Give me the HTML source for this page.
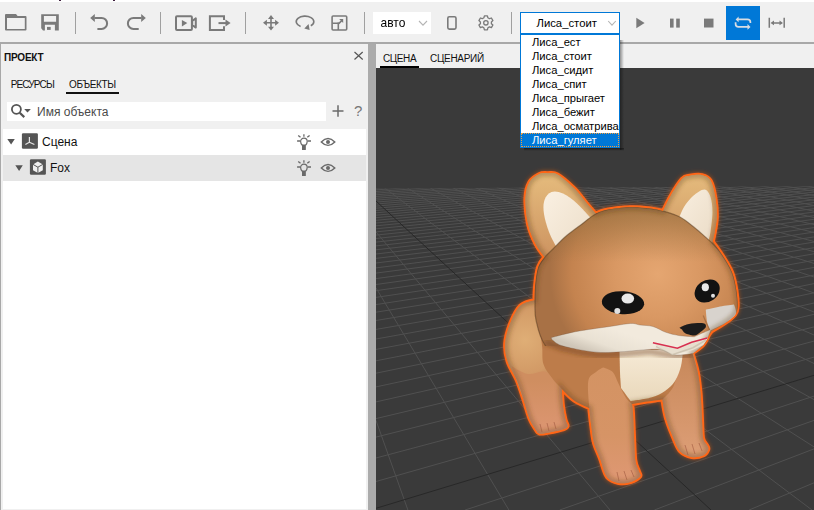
<!DOCTYPE html>
<html><head><meta charset="utf-8">
<style>
*{margin:0;padding:0;box-sizing:border-box}
html,body{width:814px;height:510px;overflow:hidden;background:#f0f0f0;font-family:"Liberation Sans",sans-serif;position:relative}
.a{position:absolute}
svg{position:absolute;overflow:visible}
.sep{position:absolute;top:12px;width:1px;height:22px;background:#a0a0a0}
</style></head><body>
<!-- top white strip -->
<div class="a" style="left:0;top:0;width:814px;height:2px;background:#fff"></div><div class="a" style="left:59px;top:0;width:2px;height:1px;background:#402040"></div><div class="a" style="left:113px;top:0;width:2px;height:1px;background:#402040"></div>
<!-- toolbar bottom border -->
<div class="a" style="left:0;top:42px;width:814px;height:2px;background:#a8a8a8"></div>

<!-- toolbar separators -->
<div class="sep" style="left:75px"></div>
<div class="sep" style="left:160px"></div>
<div class="sep" style="left:245px"></div>
<div class="sep" style="left:364px"></div>
<div class="sep" style="left:511px"></div>

<!-- left panel -->
<div class="a" style="left:0;top:44px;width:1px;height:466px;background:#a8a8a8"></div>
<div class="a" style="left:4px;top:52px;font-size:10px;font-weight:bold;color:#111;letter-spacing:-0.2px">ПРОЕКТ</div>
<div class="a" style="left:10.7px;top:79px;font-size:10px;color:#111;letter-spacing:-0.85px">РЕСУРСЫ</div>
<div class="a" style="left:69px;top:79px;font-size:10px;color:#111;letter-spacing:-0.4px">ОБЪЕКТЫ</div>
<div class="a" style="left:66px;top:92px;width:53px;height:2px;background:#111"></div>
<!-- search box -->
<div class="a" style="left:7px;top:102px;width:319px;height:19px;background:#fff"></div>
<div class="a" style="left:37px;top:105px;font-size:12px;color:#4a4a4a">Имя объекта</div>
<!-- tree -->
<div class="a" style="left:3px;top:129px;width:363px;height:380px;background:#fff"></div>
<div class="a" style="left:3px;top:155px;width:363px;height:26px;background:#e5e5e5"></div>
<div class="a" style="left:42px;top:135px;font-size:12px;color:#111">Сцена</div>
<div class="a" style="left:50px;top:161px;font-size:12px;color:#111">Fox</div>

<!-- splitter -->
<div class="a" style="left:368px;top:44px;width:8px;height:466px;background:#ababab"></div>

<!-- viewport header -->
<div class="a" style="left:383px;top:53px;font-size:10px;color:#111;letter-spacing:-0.4px">СЦЕНА</div>
<div class="a" style="left:430px;top:53px;font-size:10px;color:#111;letter-spacing:-0.3px">СЦЕНАРИЙ</div>
<div class="a" style="left:380px;top:66px;width:39px;height:2px;background:#000"></div>
<!-- viewport -->
<div class="a" style="left:376px;top:68px;width:438px;height:442px;background:#3a3a3a;overflow:hidden"></div>

<!-- GRID START -->
<svg width="814" height="510" style="left:0;top:0" viewBox="0 0 814 510">
 <defs><clipPath id="gc"><path d="M376,188.4 L814,186.2 L814,510 L376,510 Z"/></clipPath></defs>
 <g clip-path="url(#gc)" fill="none">
  <path d="M376.0 420.4L407.9 510.0M376.0 287.9L508.9 510.0M376.0 231.9L610.0 510.0M376.0 181.4L812.0 510.0M395.0 180.0L814.0 446.9M415.9 180.0L814.0 399.6M436.8 180.0L814.0 363.5M457.7 180.0L814.0 335.0M478.6 180.0L814.0 312.0M499.4 180.0L814.0 293.0M520.3 180.0L814.0 277.0M541.2 180.0L814.0 263.4M562.1 180.0L814.0 251.7M583.0 180.0L814.0 241.5M603.9 180.0L814.0 232.5M624.8 180.0L814.0 224.6M645.7 180.0L814.0 217.5M666.6 180.0L814.0 211.2M687.5 180.0L814.0 205.5M708.3 180.0L814.0 200.3M729.2 180.0L814.0 195.5M750.1 180.0L814.0 191.2M771.0 180.0L814.0 187.2M791.9 180.0L814.0 183.6M812.8 180.0L814.0 180.2M749.1 510.0L814.0 482.8M654.4 510.0L814.0 448.9M559.7 510.0L814.0 420.4M465.1 510.0L814.0 396.1M376.0 481.5L814.0 357.1M376.0 458.0L814.0 341.1M376.0 437.1L814.0 326.9M376.0 418.6L814.0 314.3M376.0 401.9L814.0 303.0M376.0 386.9L814.0 292.8M376.0 373.2L814.0 283.6M376.0 360.8L814.0 275.1M376.0 349.4L814.0 267.4M376.0 339.0L814.0 260.3M376.0 329.4L814.0 253.8M376.0 320.5L814.0 247.7M376.0 312.2L814.0 242.1M376.0 304.6L814.0 236.9M376.0 297.4L814.0 232.1M376.0 290.7L814.0 227.6M376.0 284.5L814.0 223.3M376.0 278.6L814.0 219.3M376.0 273.1L814.0 215.6M376.0 267.9L814.0 212.1M376.0 263.0L814.0 208.7M376.0 258.4L814.0 205.6M376.0 254.0L814.0 202.6M376.0 249.8L814.0 199.8M376.0 245.9L814.0 197.1M376.0 242.1L814.0 194.6M376.0 238.5L814.0 192.1M376.0 235.1L814.0 189.8M376.0 231.9L814.0 187.6M376.0 228.8L814.0 185.5M376.0 225.8L814.0 183.5M376.0 223.0L814.0 181.6M376.0 220.3L811.0 180.0M376.0 217.7L791.4 180.0M376.0 215.2L771.9 180.0M376.0 212.8L752.3 180.0M376.0 210.5L732.7 180.0M376.0 208.2L713.1 180.0M376.0 206.1L693.6 180.0M376.0 204.0L674.0 180.0M376.0 202.1L654.4 180.0M376.0 200.1L634.9 180.0M376.0 198.3L615.3 180.0M376.0 196.5L595.7 180.0M376.0 194.8L576.1 180.0M376.0 193.1L556.6 180.0M376.0 191.5L537.0 180.0M376.0 189.9L517.4 180.0M376.0 188.4L497.9 180.0M376.0 187.0L478.3 180.0M376.0 185.6L458.7 180.0M376.0 184.2L439.1 180.0M376.0 182.8L419.6 180.0M376.0 181.5L400.0 180.0M376.0 180.3L380.4 180.0" stroke="#505050" stroke-width="1"/>
  <path d="M376.0 201.0L711.0 510.0M376.0 508.3L814.0 375.3" stroke="#282828" stroke-width="1"/>
 </g>
</svg>
<!-- GRID END -->
<!-- FOX START -->
<svg width="814" height="510" style="left:0;top:0" viewBox="0 0 814 510">
 <defs>
  <radialGradient id="gHead" cx="658" cy="274" r="108" gradientUnits="userSpaceOnUse">
   <stop offset="0" stop-color="#e5a671"/>
   <stop offset="0.4" stop-color="#d99863"/>
   <stop offset="0.8" stop-color="#c4834f"/>
   <stop offset="1" stop-color="#a87145"/>
  </radialGradient>
  <linearGradient id="gHeadTop" x1="0" y1="205" x2="0" y2="262" gradientUnits="userSpaceOnUse">
   <stop offset="0" stop-color="#8a6a3a" stop-opacity="0.6"/>
   <stop offset="1" stop-color="#8a6a3a" stop-opacity="0"/>
  </linearGradient>
  <linearGradient id="gEar" x1="0" y1="170" x2="0" y2="250" gradientUnits="userSpaceOnUse">
   <stop offset="0" stop-color="#e6bd7e"/>
   <stop offset="1" stop-color="#cf9763"/>
  </linearGradient>
  <linearGradient id="gInner" x1="0" y1="0" x2="1" y2="1">
   <stop offset="0" stop-color="#faf0e2"/>
   <stop offset="1" stop-color="#eadbc5"/>
  </linearGradient>
  <radialGradient id="gHip" cx="525" cy="340" r="48" gradientUnits="userSpaceOnUse">
   <stop offset="0" stop-color="#dfae76"/>
   <stop offset="0.7" stop-color="#d29a66"/>
   <stop offset="1" stop-color="#bf8354"/>
  </radialGradient>
  <linearGradient id="gLeg" x1="0" y1="365" x2="0" y2="483" gradientUnits="userSpaceOnUse">
   <stop offset="0" stop-color="#d39363"/>
   <stop offset="0.6" stop-color="#d69466"/>
   <stop offset="1" stop-color="#df9874"/>
  </linearGradient>
  <linearGradient id="gLegR" x1="0" y1="352" x2="0" y2="457" gradientUnits="userSpaceOnUse">
   <stop offset="0" stop-color="#c7885a"/>
   <stop offset="1" stop-color="#dd9e76"/>
  </linearGradient>
  <linearGradient id="gLow" x1="0" y1="380" x2="0" y2="433" gradientUnits="userSpaceOnUse">
   <stop offset="0" stop-color="#cf8e60"/>
   <stop offset="1" stop-color="#dd9672"/>
  </linearGradient>
  <linearGradient id="gChest" x1="0" y1="350" x2="0" y2="401" gradientUnits="userSpaceOnUse">
   <stop offset="0" stop-color="#f6ead6"/>
   <stop offset="1" stop-color="#e9d8bb"/>
  </linearGradient>
  <linearGradient id="gCollar" x1="600" y1="324" x2="590" y2="352" gradientUnits="userSpaceOnUse">
   <stop offset="0" stop-color="#f2eadd"/>
   <stop offset="0.6" stop-color="#e9e1d3"/>
   <stop offset="1" stop-color="#cfc6b8"/>
  </linearGradient>
  <clipPath id="silClip"><path d="M539.0,174.2 C542.1,172.7 544.9,173.1 548.0,173.2 C551.1,173.2 553.2,172.0 557.5,174.5 C561.8,177.0 569.0,183.2 573.9,188.0 C578.8,192.8 583.1,199.1 586.7,203.3 C590.3,207.6 595.6,213.5 595.6,213.5 C595.6,213.5 601.3,210.8 607.0,209.7 C612.7,208.6 622.8,207.4 630.0,207.2 C637.2,207.0 644.9,207.8 650.4,208.4 C655.9,209.0 663.1,211.0 663.1,211.0 C663.1,211.0 667.6,201.0 670.8,195.7 C673.9,190.4 678.8,182.3 682.0,179.0 C685.2,175.7 686.7,176.4 690.0,175.8 C693.3,175.2 698.6,174.4 702.0,175.2 C705.4,176.0 708.3,176.7 710.5,180.5 C712.7,184.3 714.4,191.8 715.4,198.2 C716.4,204.5 717.1,211.4 716.7,218.6 C716.3,225.8 712.8,241.6 712.8,241.6 C712.8,241.6 718.6,249.2 721.8,254.3 C725.0,259.4 729.6,266.2 732.0,272.2 C734.4,278.1 735.4,284.3 736.3,290.0 C737.2,295.7 737.8,302.4 737.6,306.5 C737.4,310.6 737.0,311.9 734.9,314.7 C732.8,317.4 729.2,320.2 725.3,323.0 C721.4,325.8 711.6,331.2 711.6,331.2 C711.6,331.2 710.2,333.0 708.8,335.3 C707.4,337.6 706.0,341.9 703.3,344.9 C700.6,347.9 692.4,353.1 692.4,353.1 C692.4,353.1 696.4,365.5 697.8,372.4 C699.2,379.3 699.9,386.4 700.6,394.3 C701.3,402.2 701.6,412.7 702.0,420.0 C702.4,427.3 702.2,433.8 703.0,438.0 C703.8,442.2 706.1,443.4 707.0,445.3 C707.9,447.2 708.8,447.9 708.2,449.5 C707.6,451.1 706.2,453.9 703.5,455.2 C700.8,456.4 695.7,457.7 691.8,457.0 C687.9,456.3 683.1,454.5 680.0,451.2 C676.9,447.9 675.3,442.5 673.0,437.0 C670.7,431.5 667.8,424.5 666.0,418.2 C664.2,411.9 662.4,399.4 662.4,399.4 C662.4,399.4 652.1,400.7 647.0,401.5 C641.9,402.3 632.0,404.0 632.0,404.0 C632.0,404.0 632.7,408.0 633.0,413.5 C633.3,419.0 633.6,429.1 634.0,437.0 C634.4,444.9 634.5,454.9 635.3,460.6 C636.1,466.3 638.0,468.6 638.8,471.2 C639.6,473.8 641.4,474.7 640.0,476.5 C638.6,478.3 634.1,480.9 630.6,482.0 C627.1,483.1 622.7,483.8 618.8,483.0 C614.9,482.2 610.1,481.1 607.0,477.0 C603.9,472.9 602.2,463.9 600.0,458.2 C597.8,452.5 595.5,448.5 594.0,443.0 C592.5,437.5 592.0,430.8 591.2,425.0 C590.4,419.2 589.3,408.0 589.3,408.0 C589.3,408.0 578.6,403.6 574.0,400.4 C569.4,397.2 561.8,388.9 561.8,388.9 C561.8,388.9 562.2,399.8 562.8,405.0 C563.4,410.2 564.7,416.5 565.5,420.0 C566.3,423.5 567.9,424.4 567.6,425.9 C567.3,427.4 567.0,427.9 563.8,429.0 C560.6,430.1 552.5,431.8 548.5,432.5 C544.5,433.2 541.7,434.0 539.6,433.5 C537.5,433.0 537.5,432.2 535.8,429.7 C534.1,427.1 531.5,423.5 529.4,418.2 C527.3,412.9 525.1,404.2 523.0,397.8 C520.9,391.4 519.2,386.0 516.7,380.0 C514.2,374.0 509.6,367.7 507.7,361.6 C505.8,355.6 504.8,350.1 505.2,343.7 C505.6,337.3 507.8,329.7 510.3,323.3 C512.9,316.9 516.5,309.3 520.5,305.5 C524.5,301.7 534.5,300.4 534.5,300.4 C534.5,300.4 534.6,290.6 535.2,285.0 C535.8,279.4 536.6,271.7 538.2,267.0 C539.8,262.3 544.6,256.9 544.6,256.9 C544.6,256.9 538.5,249.5 535.7,244.0 C532.9,238.5 529.7,231.4 528.0,223.7 C526.3,216.0 525.2,204.9 525.5,198.0 C525.8,191.1 527.2,186.0 529.5,182.0 C531.8,178.0 535.9,175.7 539.0,174.2Z"/></clipPath>
  <clipPath id="headClip"><path d="M500,150 H760 V330 L708,336 L686,338 L651,343 L590,349 L553,346 L530,346 L500,330 Z"/></clipPath>
  <filter id="blur1" x="-10%" y="-10%" width="120%" height="120%"><feGaussianBlur stdDeviation="0.7"/></filter>
  <filter id="blur2" x="-10%" y="-10%" width="120%" height="120%"><feGaussianBlur stdDeviation="2"/></filter>
 </defs>
 <path d="M539.0,174.2 C542.1,172.7 544.9,173.1 548.0,173.2 C551.1,173.2 553.2,172.0 557.5,174.5 C561.8,177.0 569.0,183.2 573.9,188.0 C578.8,192.8 583.1,199.1 586.7,203.3 C590.3,207.6 595.6,213.5 595.6,213.5 C595.6,213.5 601.3,210.8 607.0,209.7 C612.7,208.6 622.8,207.4 630.0,207.2 C637.2,207.0 644.9,207.8 650.4,208.4 C655.9,209.0 663.1,211.0 663.1,211.0 C663.1,211.0 667.6,201.0 670.8,195.7 C673.9,190.4 678.8,182.3 682.0,179.0 C685.2,175.7 686.7,176.4 690.0,175.8 C693.3,175.2 698.6,174.4 702.0,175.2 C705.4,176.0 708.3,176.7 710.5,180.5 C712.7,184.3 714.4,191.8 715.4,198.2 C716.4,204.5 717.1,211.4 716.7,218.6 C716.3,225.8 712.8,241.6 712.8,241.6 C712.8,241.6 718.6,249.2 721.8,254.3 C725.0,259.4 729.6,266.2 732.0,272.2 C734.4,278.1 735.4,284.3 736.3,290.0 C737.2,295.7 737.8,302.4 737.6,306.5 C737.4,310.6 737.0,311.9 734.9,314.7 C732.8,317.4 729.2,320.2 725.3,323.0 C721.4,325.8 711.6,331.2 711.6,331.2 C711.6,331.2 710.2,333.0 708.8,335.3 C707.4,337.6 706.0,341.9 703.3,344.9 C700.6,347.9 692.4,353.1 692.4,353.1 C692.4,353.1 696.4,365.5 697.8,372.4 C699.2,379.3 699.9,386.4 700.6,394.3 C701.3,402.2 701.6,412.7 702.0,420.0 C702.4,427.3 702.2,433.8 703.0,438.0 C703.8,442.2 706.1,443.4 707.0,445.3 C707.9,447.2 708.8,447.9 708.2,449.5 C707.6,451.1 706.2,453.9 703.5,455.2 C700.8,456.4 695.7,457.7 691.8,457.0 C687.9,456.3 683.1,454.5 680.0,451.2 C676.9,447.9 675.3,442.5 673.0,437.0 C670.7,431.5 667.8,424.5 666.0,418.2 C664.2,411.9 662.4,399.4 662.4,399.4 C662.4,399.4 652.1,400.7 647.0,401.5 C641.9,402.3 632.0,404.0 632.0,404.0 C632.0,404.0 632.7,408.0 633.0,413.5 C633.3,419.0 633.6,429.1 634.0,437.0 C634.4,444.9 634.5,454.9 635.3,460.6 C636.1,466.3 638.0,468.6 638.8,471.2 C639.6,473.8 641.4,474.7 640.0,476.5 C638.6,478.3 634.1,480.9 630.6,482.0 C627.1,483.1 622.7,483.8 618.8,483.0 C614.9,482.2 610.1,481.1 607.0,477.0 C603.9,472.9 602.2,463.9 600.0,458.2 C597.8,452.5 595.5,448.5 594.0,443.0 C592.5,437.5 592.0,430.8 591.2,425.0 C590.4,419.2 589.3,408.0 589.3,408.0 C589.3,408.0 578.6,403.6 574.0,400.4 C569.4,397.2 561.8,388.9 561.8,388.9 C561.8,388.9 562.2,399.8 562.8,405.0 C563.4,410.2 564.7,416.5 565.5,420.0 C566.3,423.5 567.9,424.4 567.6,425.9 C567.3,427.4 567.0,427.9 563.8,429.0 C560.6,430.1 552.5,431.8 548.5,432.5 C544.5,433.2 541.7,434.0 539.6,433.5 C537.5,433.0 537.5,432.2 535.8,429.7 C534.1,427.1 531.5,423.5 529.4,418.2 C527.3,412.9 525.1,404.2 523.0,397.8 C520.9,391.4 519.2,386.0 516.7,380.0 C514.2,374.0 509.6,367.7 507.7,361.6 C505.8,355.6 504.8,350.1 505.2,343.7 C505.6,337.3 507.8,329.7 510.3,323.3 C512.9,316.9 516.5,309.3 520.5,305.5 C524.5,301.7 534.5,300.4 534.5,300.4 C534.5,300.4 534.6,290.6 535.2,285.0 C535.8,279.4 536.6,271.7 538.2,267.0 C539.8,262.3 544.6,256.9 544.6,256.9 C544.6,256.9 538.5,249.5 535.7,244.0 C532.9,238.5 529.7,231.4 528.0,223.7 C526.3,216.0 525.2,204.9 525.5,198.0 C525.8,191.1 527.2,186.0 529.5,182.0 C531.8,178.0 535.9,175.7 539.0,174.2Z" fill="#ff6618" stroke="#f25a14" stroke-width="5.5" stroke-linejoin="round" stroke-opacity="0.3" filter="url(#blur2)"/>
 <path d="M539.0,174.2 C542.1,172.7 544.9,173.1 548.0,173.2 C551.1,173.2 553.2,172.0 557.5,174.5 C561.8,177.0 569.0,183.2 573.9,188.0 C578.8,192.8 583.1,199.1 586.7,203.3 C590.3,207.6 595.6,213.5 595.6,213.5 C595.6,213.5 601.3,210.8 607.0,209.7 C612.7,208.6 622.8,207.4 630.0,207.2 C637.2,207.0 644.9,207.8 650.4,208.4 C655.9,209.0 663.1,211.0 663.1,211.0 C663.1,211.0 667.6,201.0 670.8,195.7 C673.9,190.4 678.8,182.3 682.0,179.0 C685.2,175.7 686.7,176.4 690.0,175.8 C693.3,175.2 698.6,174.4 702.0,175.2 C705.4,176.0 708.3,176.7 710.5,180.5 C712.7,184.3 714.4,191.8 715.4,198.2 C716.4,204.5 717.1,211.4 716.7,218.6 C716.3,225.8 712.8,241.6 712.8,241.6 C712.8,241.6 718.6,249.2 721.8,254.3 C725.0,259.4 729.6,266.2 732.0,272.2 C734.4,278.1 735.4,284.3 736.3,290.0 C737.2,295.7 737.8,302.4 737.6,306.5 C737.4,310.6 737.0,311.9 734.9,314.7 C732.8,317.4 729.2,320.2 725.3,323.0 C721.4,325.8 711.6,331.2 711.6,331.2 C711.6,331.2 710.2,333.0 708.8,335.3 C707.4,337.6 706.0,341.9 703.3,344.9 C700.6,347.9 692.4,353.1 692.4,353.1 C692.4,353.1 696.4,365.5 697.8,372.4 C699.2,379.3 699.9,386.4 700.6,394.3 C701.3,402.2 701.6,412.7 702.0,420.0 C702.4,427.3 702.2,433.8 703.0,438.0 C703.8,442.2 706.1,443.4 707.0,445.3 C707.9,447.2 708.8,447.9 708.2,449.5 C707.6,451.1 706.2,453.9 703.5,455.2 C700.8,456.4 695.7,457.7 691.8,457.0 C687.9,456.3 683.1,454.5 680.0,451.2 C676.9,447.9 675.3,442.5 673.0,437.0 C670.7,431.5 667.8,424.5 666.0,418.2 C664.2,411.9 662.4,399.4 662.4,399.4 C662.4,399.4 652.1,400.7 647.0,401.5 C641.9,402.3 632.0,404.0 632.0,404.0 C632.0,404.0 632.7,408.0 633.0,413.5 C633.3,419.0 633.6,429.1 634.0,437.0 C634.4,444.9 634.5,454.9 635.3,460.6 C636.1,466.3 638.0,468.6 638.8,471.2 C639.6,473.8 641.4,474.7 640.0,476.5 C638.6,478.3 634.1,480.9 630.6,482.0 C627.1,483.1 622.7,483.8 618.8,483.0 C614.9,482.2 610.1,481.1 607.0,477.0 C603.9,472.9 602.2,463.9 600.0,458.2 C597.8,452.5 595.5,448.5 594.0,443.0 C592.5,437.5 592.0,430.8 591.2,425.0 C590.4,419.2 589.3,408.0 589.3,408.0 C589.3,408.0 578.6,403.6 574.0,400.4 C569.4,397.2 561.8,388.9 561.8,388.9 C561.8,388.9 562.2,399.8 562.8,405.0 C563.4,410.2 564.7,416.5 565.5,420.0 C566.3,423.5 567.9,424.4 567.6,425.9 C567.3,427.4 567.0,427.9 563.8,429.0 C560.6,430.1 552.5,431.8 548.5,432.5 C544.5,433.2 541.7,434.0 539.6,433.5 C537.5,433.0 537.5,432.2 535.8,429.7 C534.1,427.1 531.5,423.5 529.4,418.2 C527.3,412.9 525.1,404.2 523.0,397.8 C520.9,391.4 519.2,386.0 516.7,380.0 C514.2,374.0 509.6,367.7 507.7,361.6 C505.8,355.6 504.8,350.1 505.2,343.7 C505.6,337.3 507.8,329.7 510.3,323.3 C512.9,316.9 516.5,309.3 520.5,305.5 C524.5,301.7 534.5,300.4 534.5,300.4 C534.5,300.4 534.6,290.6 535.2,285.0 C535.8,279.4 536.6,271.7 538.2,267.0 C539.8,262.3 544.6,256.9 544.6,256.9 C544.6,256.9 538.5,249.5 535.7,244.0 C532.9,238.5 529.7,231.4 528.0,223.7 C526.3,216.0 525.2,204.9 525.5,198.0 C525.8,191.1 527.2,186.0 529.5,182.0 C531.8,178.0 535.9,175.7 539.0,174.2Z" fill="#ff6618" stroke="#ff6618" stroke-width="4" stroke-linejoin="round" filter="url(#blur1)"/>
 <path d="M539.0,174.2 C542.1,172.7 544.9,173.1 548.0,173.2 C551.1,173.2 553.2,172.0 557.5,174.5 C561.8,177.0 569.0,183.2 573.9,188.0 C578.8,192.8 583.1,199.1 586.7,203.3 C590.3,207.6 595.6,213.5 595.6,213.5 C595.6,213.5 601.3,210.8 607.0,209.7 C612.7,208.6 622.8,207.4 630.0,207.2 C637.2,207.0 644.9,207.8 650.4,208.4 C655.9,209.0 663.1,211.0 663.1,211.0 C663.1,211.0 667.6,201.0 670.8,195.7 C673.9,190.4 678.8,182.3 682.0,179.0 C685.2,175.7 686.7,176.4 690.0,175.8 C693.3,175.2 698.6,174.4 702.0,175.2 C705.4,176.0 708.3,176.7 710.5,180.5 C712.7,184.3 714.4,191.8 715.4,198.2 C716.4,204.5 717.1,211.4 716.7,218.6 C716.3,225.8 712.8,241.6 712.8,241.6 C712.8,241.6 718.6,249.2 721.8,254.3 C725.0,259.4 729.6,266.2 732.0,272.2 C734.4,278.1 735.4,284.3 736.3,290.0 C737.2,295.7 737.8,302.4 737.6,306.5 C737.4,310.6 737.0,311.9 734.9,314.7 C732.8,317.4 729.2,320.2 725.3,323.0 C721.4,325.8 711.6,331.2 711.6,331.2 C711.6,331.2 710.2,333.0 708.8,335.3 C707.4,337.6 706.0,341.9 703.3,344.9 C700.6,347.9 692.4,353.1 692.4,353.1 C692.4,353.1 696.4,365.5 697.8,372.4 C699.2,379.3 699.9,386.4 700.6,394.3 C701.3,402.2 701.6,412.7 702.0,420.0 C702.4,427.3 702.2,433.8 703.0,438.0 C703.8,442.2 706.1,443.4 707.0,445.3 C707.9,447.2 708.8,447.9 708.2,449.5 C707.6,451.1 706.2,453.9 703.5,455.2 C700.8,456.4 695.7,457.7 691.8,457.0 C687.9,456.3 683.1,454.5 680.0,451.2 C676.9,447.9 675.3,442.5 673.0,437.0 C670.7,431.5 667.8,424.5 666.0,418.2 C664.2,411.9 662.4,399.4 662.4,399.4 C662.4,399.4 652.1,400.7 647.0,401.5 C641.9,402.3 632.0,404.0 632.0,404.0 C632.0,404.0 632.7,408.0 633.0,413.5 C633.3,419.0 633.6,429.1 634.0,437.0 C634.4,444.9 634.5,454.9 635.3,460.6 C636.1,466.3 638.0,468.6 638.8,471.2 C639.6,473.8 641.4,474.7 640.0,476.5 C638.6,478.3 634.1,480.9 630.6,482.0 C627.1,483.1 622.7,483.8 618.8,483.0 C614.9,482.2 610.1,481.1 607.0,477.0 C603.9,472.9 602.2,463.9 600.0,458.2 C597.8,452.5 595.5,448.5 594.0,443.0 C592.5,437.5 592.0,430.8 591.2,425.0 C590.4,419.2 589.3,408.0 589.3,408.0 C589.3,408.0 578.6,403.6 574.0,400.4 C569.4,397.2 561.8,388.9 561.8,388.9 C561.8,388.9 562.2,399.8 562.8,405.0 C563.4,410.2 564.7,416.5 565.5,420.0 C566.3,423.5 567.9,424.4 567.6,425.9 C567.3,427.4 567.0,427.9 563.8,429.0 C560.6,430.1 552.5,431.8 548.5,432.5 C544.5,433.2 541.7,434.0 539.6,433.5 C537.5,433.0 537.5,432.2 535.8,429.7 C534.1,427.1 531.5,423.5 529.4,418.2 C527.3,412.9 525.1,404.2 523.0,397.8 C520.9,391.4 519.2,386.0 516.7,380.0 C514.2,374.0 509.6,367.7 507.7,361.6 C505.8,355.6 504.8,350.1 505.2,343.7 C505.6,337.3 507.8,329.7 510.3,323.3 C512.9,316.9 516.5,309.3 520.5,305.5 C524.5,301.7 534.5,300.4 534.5,300.4 C534.5,300.4 534.6,290.6 535.2,285.0 C535.8,279.4 536.6,271.7 538.2,267.0 C539.8,262.3 544.6,256.9 544.6,256.9 C544.6,256.9 538.5,249.5 535.7,244.0 C532.9,238.5 529.7,231.4 528.0,223.7 C526.3,216.0 525.2,204.9 525.5,198.0 C525.8,191.1 527.2,186.0 529.5,182.0 C531.8,178.0 535.9,175.7 539.0,174.2Z" fill="#bd7c4a"/>
 <path d="M534.5,300.4 C534.5,300.4 524.5,301.7 520.5,305.5 C516.5,309.3 512.9,316.9 510.3,323.3 C507.8,329.7 505.6,337.3 505.2,343.7 C504.8,350.1 505.8,355.6 507.7,361.6 C509.6,367.7 514.2,374.0 516.7,380.0 C519.2,386.0 520.9,391.4 523.0,397.8 C525.1,404.2 527.3,412.9 529.4,418.2 C531.5,423.5 534.1,427.1 535.8,429.7 C537.5,432.2 537.5,433.0 539.6,433.5 C541.7,434.0 544.5,433.2 548.5,432.5 C552.5,431.8 560.6,430.1 563.8,429.0 C567.0,427.9 567.3,427.4 567.6,425.9 C567.9,424.4 566.3,423.5 565.5,420.0 C564.7,416.5 563.4,410.2 562.8,405.0 C562.2,399.8 561.8,388.9 561.8,388.9 C561.8,388.9 555.1,382.1 552.0,378.0 C548.9,373.9 545.1,369.5 543.4,364.0 C541.7,358.5 542.9,352.3 542.0,345.0 C541.1,337.7 539.2,327.4 538.0,320.0 C536.8,312.6 534.5,300.4 534.5,300.4Z" fill="url(#gHip)"/>
 <path d="M511.5,366.0 C511.5,366.0 522.4,373.1 528.0,374.0 C533.6,374.9 540.5,370.2 545.0,371.5 C549.5,372.8 552.2,379.1 555.0,382.0 C557.8,384.9 561.8,389.0 561.8,389.0 C561.8,389.0 562.2,399.8 562.8,405.0 C563.4,410.2 564.7,416.5 565.5,420.0 C566.3,423.5 567.9,424.4 567.6,425.9 C567.3,427.4 567.0,427.9 563.8,429.0 C560.6,430.1 552.5,431.8 548.5,432.5 C544.5,433.2 541.7,434.0 539.6,433.5 C537.5,433.0 537.5,432.2 535.8,429.7 C534.1,427.1 531.5,423.5 529.4,418.2 C527.3,412.9 526.0,406.5 523.0,397.8 C520.0,389.1 511.5,366.0 511.5,366.0Z" fill="url(#gLow)"/>
 <path d="M588.3,381.0 C589.4,375.0 593.5,374.2 596.0,372.0 C598.5,369.8 603.0,367.5 603.0,367.5 C603.0,367.5 610.2,369.4 612.7,372.0 C615.2,374.6 616.1,379.0 618.3,383.3 C620.5,387.6 623.7,394.6 626.0,398.0 C628.3,401.4 632.0,404.0 632.0,404.0 C632.0,404.0 632.7,408.0 633.0,413.5 C633.3,419.0 633.6,429.1 634.0,437.0 C634.4,444.9 634.5,454.9 635.3,460.6 C636.1,466.3 638.0,468.6 638.8,471.2 C639.6,473.8 641.4,474.7 640.0,476.5 C638.6,478.3 634.1,480.9 630.6,482.0 C627.1,483.1 622.7,483.8 618.8,483.0 C614.9,482.2 610.1,481.1 607.0,477.0 C603.9,472.9 602.2,463.9 600.0,458.2 C597.8,452.5 595.5,448.5 594.0,443.0 C592.5,437.5 592.0,430.8 591.2,425.0 C590.4,419.2 589.8,415.3 589.3,408.0 C588.8,400.7 587.2,387.0 588.3,381.0Z" fill="url(#gLeg)"/>
 <path d="M680.0,352.0 C680.0,352.0 693.3,353.0 693.3,353.0 C693.3,353.0 696.6,365.5 697.8,372.4 C699.0,379.3 699.9,386.4 700.6,394.3 C701.3,402.2 701.6,412.7 702.0,420.0 C702.4,427.3 702.2,433.8 703.0,438.0 C703.8,442.2 706.1,443.4 707.0,445.3 C707.9,447.2 708.8,447.9 708.2,449.5 C707.6,451.1 706.2,453.9 703.5,455.2 C700.8,456.4 695.7,457.7 691.8,457.0 C687.9,456.3 683.1,454.5 680.0,451.2 C676.9,447.9 675.3,442.5 673.0,437.0 C670.7,431.5 667.8,424.5 666.0,418.2 C664.2,411.9 662.4,399.4 662.4,399.4 C662.4,399.4 670.4,392.7 673.3,386.7 C676.2,380.7 678.9,369.1 680.0,363.3 C681.1,357.5 680.0,352.0 680.0,352.0Z" fill="url(#gLegR)"/>
 <path d="M619.5,350.0 C619.5,350.0 619.8,365.7 620.0,372.0 C620.2,378.3 621.0,388.0 621.0,388.0 C621.0,388.0 630.6,401.0 630.6,401.0 C630.6,401.0 645.3,399.2 651.0,397.5 C656.7,395.8 661.0,393.8 665.0,391.0 C669.0,388.2 672.3,385.2 675.0,381.0 C677.7,376.8 679.7,371.2 681.0,366.0 C682.3,360.8 683.0,350.0 683.0,350.0 C683.0,350.0 619.5,350.0 619.5,350.0Z" fill="url(#gChest)"/>
 <path d="M539.0,174.2 C542.1,172.7 544.9,173.1 548.0,173.2 C551.1,173.2 553.2,172.0 557.5,174.5 C561.8,177.0 569.0,183.2 573.9,188.0 C578.8,192.8 583.1,199.1 586.7,203.3 C590.3,207.6 595.6,213.5 595.6,213.5 C595.6,213.5 600.0,240.0 600.0,240.0 C600.0,240.0 560.0,268.0 560.0,268.0 C560.0,268.0 544.6,256.9 544.6,256.9 C544.6,256.9 538.5,249.5 535.7,244.0 C532.9,238.5 529.7,231.4 528.0,223.7 C526.3,216.0 525.2,204.9 525.5,198.0 C525.8,191.1 527.2,186.0 529.5,182.0 C531.8,178.0 535.9,175.7 539.0,174.2Z" fill="url(#gEar)"/>
 <path d="M551.5,192.0 C554.6,190.9 558.8,191.6 563.0,193.5 C567.2,195.4 572.1,199.1 577.0,203.5 C581.9,207.9 592.5,220.0 592.5,220.0 C592.5,220.0 595.0,232.0 595.0,232.0 C595.0,232.0 566.0,260.0 566.0,260.0 C566.0,260.0 559.8,252.7 557.0,248.0 C554.2,243.3 551.2,237.7 549.0,232.0 C546.8,226.3 544.8,219.3 544.0,214.0 C543.2,208.7 543.2,203.7 544.5,200.0 C545.8,196.3 548.4,193.1 551.5,192.0Z" fill="url(#gInner)"/>
 <path d="M663.1,211.0 C663.1,211.0 667.6,201.0 670.8,195.7 C673.9,190.4 678.8,182.3 682.0,179.0 C685.2,175.7 686.7,176.4 690.0,175.8 C693.3,175.2 698.6,174.4 702.0,175.2 C705.4,176.0 708.3,176.7 710.5,180.5 C712.7,184.3 714.4,191.8 715.4,198.2 C716.4,204.5 717.1,211.4 716.7,218.6 C716.3,225.8 712.8,241.6 712.8,241.6 C712.8,241.6 705.0,255.0 705.0,255.0 C705.0,255.0 660.0,228.0 660.0,228.0 C660.0,228.0 663.1,211.0 663.1,211.0Z" fill="url(#gEar)"/>
 <path d="M704.5,189.5 C707.4,189.7 709.2,193.2 710.5,197.0 C711.8,200.8 712.5,206.2 712.5,212.0 C712.5,217.8 711.2,227.0 710.5,232.0 C709.8,237.0 708.0,242.0 708.0,242.0 C708.0,242.0 700.0,250.0 700.0,250.0 C700.0,250.0 672.0,226.0 672.0,226.0 C672.0,226.0 676.4,221.8 678.4,218.6 C680.4,215.4 681.6,210.8 684.0,207.0 C686.4,203.2 689.6,198.9 693.0,196.0 C696.4,193.1 701.6,189.3 704.5,189.5Z" fill="url(#gInner)"/>
 <g clip-path="url(#silClip)"><g clip-path="url(#headClip)">
  <path d="M544.6,257.5 C547.1,254.3 549.6,252.4 553.0,249.0 C556.4,245.6 560.5,240.9 565.0,237.0 C569.5,233.1 574.9,229.3 580.0,225.5 C585.1,221.7 590.6,216.8 595.6,214.0 C600.6,211.2 604.3,210.1 610.0,209.0 C615.7,207.9 623.3,207.3 630.0,207.2 C636.7,207.1 644.9,207.8 650.4,208.4 C655.9,209.0 658.2,209.6 663.1,211.0 C668.0,212.4 674.7,214.2 680.0,217.0 C685.3,219.8 690.7,224.6 695.0,228.0 C699.3,231.4 702.8,234.7 706.0,237.5 C709.2,240.3 711.4,242.2 714.0,245.0 C716.6,247.8 718.8,249.8 721.8,254.3 C724.8,258.8 729.6,266.2 732.0,272.2 C734.4,278.1 735.4,284.3 736.3,290.0 C737.2,295.7 737.8,299.8 737.6,306.5 C737.4,313.2 741.3,317.8 735.0,330.0 C728.7,342.2 715.8,369.0 700.0,380.0 C684.2,391.0 661.7,397.7 640.0,396.0 C618.3,394.3 585.8,378.5 570.0,370.0 C554.2,361.5 550.7,353.3 545.0,345.0 C539.3,336.7 537.7,327.5 536.0,320.0 C534.3,312.5 535.1,306.0 535.0,300.0 C534.9,294.0 535.0,289.3 535.5,284.0 C536.0,278.7 536.7,272.4 538.2,268.0 C539.7,263.6 542.1,260.7 544.6,257.5Z" fill="url(#gHead)"/>
  <path d="M544.6,257.5 C547.1,254.3 549.6,252.4 553.0,249.0 C556.4,245.6 560.5,240.9 565.0,237.0 C569.5,233.1 574.9,229.3 580.0,225.5 C585.1,221.7 590.6,216.8 595.6,214.0 C600.6,211.2 604.3,210.1 610.0,209.0 C615.7,207.9 623.3,207.3 630.0,207.2 C636.7,207.1 644.9,207.8 650.4,208.4 C655.9,209.0 658.2,209.6 663.1,211.0 C668.0,212.4 674.7,214.2 680.0,217.0 C685.3,219.8 690.7,224.6 695.0,228.0 C699.3,231.4 702.8,234.7 706.0,237.5 C709.2,240.3 711.4,242.2 714.0,245.0 C716.6,247.8 718.8,249.8 721.8,254.3 C724.8,258.8 729.6,266.2 732.0,272.2 C734.4,278.1 735.4,284.3 736.3,290.0 C737.2,295.7 737.8,299.8 737.6,306.5 C737.4,313.2 741.3,317.8 735.0,330.0 C728.7,342.2 715.8,369.0 700.0,380.0 C684.2,391.0 661.7,397.7 640.0,396.0 C618.3,394.3 585.8,378.5 570.0,370.0 C554.2,361.5 550.7,353.3 545.0,345.0 C539.3,336.7 537.7,327.5 536.0,320.0 C534.3,312.5 535.1,306.0 535.0,300.0 C534.9,294.0 535.0,289.3 535.5,284.0 C536.0,278.7 536.7,272.4 538.2,268.0 C539.7,263.6 542.1,260.7 544.6,257.5Z" fill="url(#gHeadTop)"/>
 </g></g>
 <g clip-path="url(#silClip)"><path d="M545,342 L561.4,348 L581.8,352.5 L600.6,355 L621,354 L650,351.5 L676,356 L693,355" fill="none" stroke="#6a3a18" stroke-opacity="0.45" stroke-width="6" filter="url(#blur2)"/></g>
 <g clip-path="url(#silClip)"><g clip-path="url(#headClip)"><path d="M544.6,257.5 C547.1,254.3 549.6,252.4 553.0,249.0 C556.4,245.6 560.5,240.9 565.0,237.0 C569.5,233.1 574.9,229.3 580.0,225.5 C585.1,221.7 590.6,216.8 595.6,214.0 C600.6,211.2 604.3,210.1 610.0,209.0 C615.7,207.9 623.3,207.3 630.0,207.2 C636.7,207.1 644.9,207.8 650.4,208.4 C655.9,209.0 658.2,209.6 663.1,211.0 C668.0,212.4 674.7,214.2 680.0,217.0 C685.3,219.8 690.7,224.6 695.0,228.0 C699.3,231.4 702.8,234.7 706.0,237.5 C709.2,240.3 711.4,242.2 714.0,245.0 C716.6,247.8 718.8,249.8 721.8,254.3 C724.8,258.8 729.6,266.2 732.0,272.2 C734.4,278.1 735.4,284.3 736.3,290.0 C737.2,295.7 737.8,299.8 737.6,306.5 C737.4,313.2 741.3,317.8 735.0,330.0 C728.7,342.2 715.8,369.0 700.0,380.0 C684.2,391.0 661.7,397.7 640.0,396.0 C618.3,394.3 585.8,378.5 570.0,370.0 C554.2,361.5 550.7,353.3 545.0,345.0 C539.3,336.7 537.7,327.5 536.0,320.0 C534.3,312.5 535.1,306.0 535.0,300.0 C534.9,294.0 535.0,289.3 535.5,284.0 C536.0,278.7 536.7,272.4 538.2,268.0 C539.7,263.6 542.1,260.7 544.6,257.5Z" fill="none" stroke="#4a3018" stroke-opacity="0.45" stroke-width="1.2" filter="url(#blur1)"/></g></g>
 <path d="M551.2,337.6 C551.2,337.6 567.5,333.2 577.0,331.4 C586.5,329.6 599.5,328.0 608.4,326.7 C617.3,325.4 625.1,323.8 630.4,323.5 C635.7,323.2 636.2,324.5 640.0,325.0 C643.8,325.5 648.6,325.3 652.9,326.5 C657.2,327.7 661.5,330.8 665.8,332.3 C670.1,333.8 674.0,334.8 678.7,335.5 C683.4,336.2 694.2,336.8 694.2,336.8 C694.2,336.8 704.3,332.2 707.1,331.0 C709.9,329.8 711.0,329.5 711.0,329.5 C711.0,329.5 710.1,332.7 708.8,335.3 C707.5,337.9 706.0,341.9 703.3,344.9 C700.6,347.9 692.4,353.5 692.4,353.5 C692.4,353.5 681.1,355.6 676.0,355.0 C670.9,354.4 666.3,350.9 662.0,350.0 C657.7,349.1 656.8,349.1 650.0,349.4 C643.2,349.7 629.2,351.3 621.0,351.8 C612.8,352.3 607.1,352.8 600.6,352.5 C594.1,352.2 588.3,351.4 581.8,350.2 C575.3,349.0 566.2,347.1 561.4,345.5 C556.6,343.9 554.7,341.8 553.0,340.5 C551.3,339.2 551.2,337.6 551.2,337.6Z" fill="url(#gCollar)" stroke="#6a5040" stroke-opacity="0.35" stroke-width="0.8"/>
 <path d="M705.8,309.7 C705.8,309.7 715.3,307.4 720.0,306.5 C724.7,305.6 734.0,304.5 734.0,304.5 C734.0,304.5 736.6,310.5 736.0,313.0 C735.4,315.5 733.0,317.3 730.3,319.4 C727.6,321.5 723.3,323.9 720.0,325.8 C716.7,327.7 710.3,330.5 710.3,330.5 C710.3,330.5 707.9,325.4 707.1,321.9 C706.4,318.4 705.8,309.7 705.8,309.7Z" fill="#d8d3cd"/>
 <g clip-path="url(#silClip)"><path d="M539.0,174.2 C542.1,172.7 544.9,173.1 548.0,173.2 C551.1,173.2 553.2,172.0 557.5,174.5 C561.8,177.0 569.0,183.2 573.9,188.0 C578.8,192.8 583.1,199.1 586.7,203.3 C590.3,207.6 595.6,213.5 595.6,213.5 C595.6,213.5 601.3,210.8 607.0,209.7 C612.7,208.6 622.8,207.4 630.0,207.2 C637.2,207.0 644.9,207.8 650.4,208.4 C655.9,209.0 663.1,211.0 663.1,211.0 C663.1,211.0 667.6,201.0 670.8,195.7 C673.9,190.4 678.8,182.3 682.0,179.0 C685.2,175.7 686.7,176.4 690.0,175.8 C693.3,175.2 698.6,174.4 702.0,175.2 C705.4,176.0 708.3,176.7 710.5,180.5 C712.7,184.3 714.4,191.8 715.4,198.2 C716.4,204.5 717.1,211.4 716.7,218.6 C716.3,225.8 712.8,241.6 712.8,241.6 C712.8,241.6 718.6,249.2 721.8,254.3 C725.0,259.4 729.6,266.2 732.0,272.2 C734.4,278.1 735.4,284.3 736.3,290.0 C737.2,295.7 737.8,302.4 737.6,306.5 C737.4,310.6 737.0,311.9 734.9,314.7 C732.8,317.4 729.2,320.2 725.3,323.0 C721.4,325.8 711.6,331.2 711.6,331.2 C711.6,331.2 710.2,333.0 708.8,335.3 C707.4,337.6 706.0,341.9 703.3,344.9 C700.6,347.9 692.4,353.1 692.4,353.1 C692.4,353.1 696.4,365.5 697.8,372.4 C699.2,379.3 699.9,386.4 700.6,394.3 C701.3,402.2 701.6,412.7 702.0,420.0 C702.4,427.3 702.2,433.8 703.0,438.0 C703.8,442.2 706.1,443.4 707.0,445.3 C707.9,447.2 708.8,447.9 708.2,449.5 C707.6,451.1 706.2,453.9 703.5,455.2 C700.8,456.4 695.7,457.7 691.8,457.0 C687.9,456.3 683.1,454.5 680.0,451.2 C676.9,447.9 675.3,442.5 673.0,437.0 C670.7,431.5 667.8,424.5 666.0,418.2 C664.2,411.9 662.4,399.4 662.4,399.4 C662.4,399.4 652.1,400.7 647.0,401.5 C641.9,402.3 632.0,404.0 632.0,404.0 C632.0,404.0 632.7,408.0 633.0,413.5 C633.3,419.0 633.6,429.1 634.0,437.0 C634.4,444.9 634.5,454.9 635.3,460.6 C636.1,466.3 638.0,468.6 638.8,471.2 C639.6,473.8 641.4,474.7 640.0,476.5 C638.6,478.3 634.1,480.9 630.6,482.0 C627.1,483.1 622.7,483.8 618.8,483.0 C614.9,482.2 610.1,481.1 607.0,477.0 C603.9,472.9 602.2,463.9 600.0,458.2 C597.8,452.5 595.5,448.5 594.0,443.0 C592.5,437.5 592.0,430.8 591.2,425.0 C590.4,419.2 589.3,408.0 589.3,408.0 C589.3,408.0 578.6,403.6 574.0,400.4 C569.4,397.2 561.8,388.9 561.8,388.9 C561.8,388.9 562.2,399.8 562.8,405.0 C563.4,410.2 564.7,416.5 565.5,420.0 C566.3,423.5 567.9,424.4 567.6,425.9 C567.3,427.4 567.0,427.9 563.8,429.0 C560.6,430.1 552.5,431.8 548.5,432.5 C544.5,433.2 541.7,434.0 539.6,433.5 C537.5,433.0 537.5,432.2 535.8,429.7 C534.1,427.1 531.5,423.5 529.4,418.2 C527.3,412.9 525.1,404.2 523.0,397.8 C520.9,391.4 519.2,386.0 516.7,380.0 C514.2,374.0 509.6,367.7 507.7,361.6 C505.8,355.6 504.8,350.1 505.2,343.7 C505.6,337.3 507.8,329.7 510.3,323.3 C512.9,316.9 516.5,309.3 520.5,305.5 C524.5,301.7 534.5,300.4 534.5,300.4 C534.5,300.4 534.6,290.6 535.2,285.0 C535.8,279.4 536.6,271.7 538.2,267.0 C539.8,262.3 544.6,256.9 544.6,256.9 C544.6,256.9 538.5,249.5 535.7,244.0 C532.9,238.5 529.7,231.4 528.0,223.7 C526.3,216.0 525.2,204.9 525.5,198.0 C525.8,191.1 527.2,186.0 529.5,182.0 C531.8,178.0 535.9,175.7 539.0,174.2Z" fill="none" stroke="#5a3a1a" stroke-opacity="0.35" stroke-width="6" filter="url(#blur2)"/></g>
 <path d="M653,343 L677.4,348.6 L691.6,342.5 L708,338 L703.3,344.9 L692.9,350 L672.3,355 Z" fill="#e8dfcf"/>
 <path d="M656,346.5 L672.3,354.8 L692.9,347.7 L706,340" fill="none" stroke="#b8ab98" stroke-width="1.5" opacity="0.5"/>
 <path d="M652.9,342.8 L677.4,348.2 L691.6,342.2 L707.3,338" fill="none" stroke="#d83050" stroke-width="1.6"/>
 <path d="M703.2,315.5 Q706,323 709.7,329.7" fill="none" stroke="#6a4020" stroke-width="1.2" opacity="0.35"/>
 <path d="M679.4,327.7 C679.4,327.7 683.0,326.0 683.0,326.0 C683.0,326.0 685.6,324.4 689.0,323.9 C692.4,323.4 700.4,322.7 703.2,323.2 C706.0,323.7 706.3,325.6 705.8,327.1 C705.3,328.7 701.9,331.1 700.0,332.5 C698.1,333.9 696.5,335.3 694.2,335.5 C691.9,335.7 686.0,333.8 686.0,333.8 C686.0,333.8 683.9,332.3 683.9,332.3 C683.9,332.3 682.0,329.5 682.0,329.5 C682.0,329.5 679.4,327.7 679.4,327.7Z" fill="#1c1c1c"/>
 <g fill="none" stroke="#a05a40" stroke-width="1" opacity="0.6">
  <path d="M540,424 L542,432 M547,423 L549,431 M554,422 L556,429"/>
  <path d="M617,472 L619,481 M624,471 L627,480 M631,470 L634,477"/>
  <path d="M685,445 L688,455 M692,444 L695,454 M699,443 L702,451"/>
 </g>
 <ellipse cx="623" cy="302.7" rx="21.2" ry="11.5" transform="rotate(4 623 302.7)" fill="#121212"/>
 <ellipse cx="627.8" cy="298.6" rx="6.3" ry="5" fill="#e8e8e8"/>
 <circle cx="617.3" cy="310.9" r="3" fill="#e0e0e0"/>
 <ellipse cx="707.2" cy="291" rx="13.4" ry="10.6" transform="rotate(-35 707.2 291)" fill="#121212"/>
 <ellipse cx="705.3" cy="287.2" rx="3.6" ry="4" fill="#e8e8e8"/>
 <circle cx="713" cy="295.7" r="2" fill="#e0e0e0"/>
</svg>
<!-- FOX END -->

<!-- auto select -->
<div class="a" style="left:373px;top:12px;width:58px;height:22px;background:#fff"></div>
<div class="a" style="left:380.5px;top:15.5px;font-size:12px;color:#000;line-height:14px;transform:scaleY(1.12);transform-origin:0 100%">авто</div>
<!-- anim select -->
<div class="a" style="left:520px;top:12px;width:100px;height:22px;background:#fff;border:1.5px solid #0078d7"></div>
<div class="a" style="left:536.5px;top:16.5px;font-size:11.3px;color:#000;line-height:13px">Лиса_стоит</div>
<!-- dropdown list -->
<div class="a" style="left:620px;top:40px;width:4px;height:110px;background:linear-gradient(90deg,rgba(0,0,0,0.4),rgba(0,0,0,0))"></div>
<div class="a" style="left:524px;top:148px;width:100px;height:3px;background:linear-gradient(180deg,rgba(0,0,0,0.45),rgba(0,0,0,0))"></div>
<div class="a" style="left:520px;top:33px;width:100px;height:115px;background:#fff;border:1px solid #0078d7;border-top:2px solid #0078d7;overflow:hidden">
 <div style="position:absolute;left:0;top:98px;width:98px;height:14px;background:#0078d7;outline:1px dotted #f0a040;outline-offset:-1px"></div>
 <div style="position:absolute;left:11px;top:0;font-size:11.2px;line-height:14px;color:#000;white-space:nowrap">
  <div>Лиса_ест</div><div>Лиса_стоит</div><div>Лиса_сидит</div><div>Лиса_спит</div><div>Лиса_прыгает</div><div>Лиса_бежит</div><div>Лиса_осматривает</div><div style="color:#fff">Лиса_гуляет</div>
 </div>
</div>

<!-- UI ICONS -->
<svg width="814" height="510" style="left:0;top:0" viewBox="0 0 814 510">
 <g fill="#7a7a7a">
  <!-- folder -->
  <path fill-rule="evenodd" d="M5,15 Q5,14 6,14 L16,14 L17.6,16 L25.5,16 Q26.5,16 26.5,17 L26.5,29.6 Q26.5,30.6 25.5,30.6 L6,30.6 Q5,30.6 5,29.6 Z M7,18.1 L24.8,18.1 L24.8,28.9 L7,28.9 Z"/>
  <!-- save -->
  <path fill-rule="evenodd" d="M41.2,14.2 L58.8,14.2 L58.8,30.6 L54.9,30.6 L54.9,24.7 L44.9,24.7 L44.9,30.6 L43,30.6 L41.2,28.2 Z M43.9,16.1 L56.1,16.1 L56.1,21.8 L43.9,21.8 Z"/>
  <rect x="47" y="26.9" width="3.7" height="3"/>
  <!-- undo head -->
  <path d="M90.2,17.9 L94.8,13.9 L94.8,21.9 Z"/>
  <path d="M145.8,17.9 L141.2,13.9 L141.2,21.9 Z"/>
  <!-- video play -->
  <path d="M181.9,19.9 L187.3,23.1 L181.9,26.4 Z"/>
  <!-- export arrow head -->
  <path d="M225.5,19.6 L230.6,23.1 L225.5,26.6 Z"/>
  <!-- move arrows -->
  <path d="M271,15 L274,18.9 L268,18.9 Z M271,30.6 L274,26.7 L268,26.7 Z M263,22.7 L266.9,19.7 L266.9,25.7 Z M279,22.7 L275.1,19.7 L275.1,25.7 Z"/>
  <!-- rotate head -->
  <path d="M304.3,28.6 L308.6,24 L309.6,30 Z"/>
  <!-- scale arrow head -->
  <path d="M343.2,18.9 L343.2,23 L339.2,18.9 Z"/>
  <!-- play pause stop -->
  <path d="M636.3,17.7 L644.6,23 L636.3,28.3 Z"/>
  <rect x="670" y="18.6" width="3.6" height="9"/>
  <rect x="676.2" y="18.6" width="3.6" height="9"/>
  <rect x="704" y="18.6" width="9.5" height="8.9"/>
  <!-- width heads -->
  <path d="M770.5,22.9 L774,20.6 L774,25.2 Z M783,22.9 L779.5,20.6 L779.5,25.2 Z"/>
 </g>
 <g fill="none" stroke="#7a7a7a" stroke-width="2">
  <path d="M94.5,17.9 H101.6 A5.5,5.5 0 0 1 101.6,28.9 H97.4"/>
  <path d="M141.5,17.9 H133.4 A5.5,5.5 0 0 0 133.4,28.9 H138.7"/>
  <rect x="176" y="16.2" width="15.9" height="13.7" rx="1"/>
  <path d="M192.2,21 L195.8,18.4 L195.8,27.6 L192.2,25 Z" stroke-linejoin="round"/>
  <path d="M224,19.9 V16.2 H209.9 V29.9 H224 V26.2"/>
  <path d="M218.5,23.1 H227"/>
 </g>
 <g fill="none" stroke="#7a7a7a" stroke-width="1.6">
  <path d="M271,18 V27.5 M266,22.7 H276"/>
  <path d="M300.6,26.4 A8.8,5.5 0 1 1 310.8,25.8"/>
  <rect x="332.1" y="16" width="14.6" height="14" rx="1"/>
  <path d="M338.3,22.2 V30 M332.5,23.3 H338.3 M338.8,23.6 L342.3,20"/>
  <rect x="447.8" y="16.7" width="8.2" height="12.4" rx="1.5"/>
  <path d="M419,21 L423,25.2 L427,21" stroke="#b4b4b4" stroke-width="1.1"/>
  <path d="M608.2,21 L612,25.2 L615.8,21" stroke="#b4b4b4" stroke-width="1.1"/>
  <path d="M769.3,17.8 V27.8 M784.2,17.8 V27.8 M772,22.9 H781.5" stroke-width="1.5"/>
 </g>
 <!-- gear -->
 <g transform="translate(485.9,22.8)" fill="none" stroke="#7a7a7a" stroke-width="1.3">
  <path d="M-1.5,-7 L1.5,-7 L2,-5 L3.6,-4.1 L5.5,-4.8 L7,-2.2 L5.5,-0.9 L5.5,0.9 L7,2.2 L5.5,4.8 L3.6,4.1 L2,5 L1.5,7 L-1.5,7 L-2,5 L-3.6,4.1 L-5.5,4.8 L-7,2.2 L-5.5,0.9 L-5.5,-0.9 L-7,-2.2 L-5.5,-4.8 L-3.6,-4.1 L-2,-5 Z" stroke-linejoin="round"/>
  <circle r="2.2"/>
 </g>
 <!-- loop on blue -->
 <rect x="726" y="6" width="34" height="34" fill="#0078d7"/>
 <g fill="none" stroke="#d8dde3" stroke-width="1.7">
  <path d="M737.5,19.4 H747.5 Q750.4,19.4 750.4,22.3 V23"/>
  <path d="M735.6,22.3 V24 Q735.6,26.9 738.5,26.9 H748.5"/>
 </g>
 <path d="M735.6,19.4 L738.6,16.6 L738.6,22.2 Z M750.5,26.9 L747.5,24.1 L747.5,29.7 Z" fill="#d8dde3"/>

 <!-- panel icons -->
 <g fill="none" stroke="#555" stroke-width="1.3">
  <path d="M354.5,52 L362.7,59.5 M362.7,52 L354.5,59.5" stroke="#555" stroke-width="1.2"/>
  <path d="M332.5,111 H343.5 M338,105.3 V116.8" stroke="#6a6a6a" stroke-width="1.5"/>
  <circle cx="16.4" cy="109.3" r="4.5" stroke-width="1.8"/>
  <path d="M19.7,112.7 L24.3,117.1" stroke-width="2.2"/>
 </g>
 <path d="M24.2,109.1 H30.9 L27.5,112.5 Z" fill="#555"/>
 <!-- tree triangles -->
 <path d="M7.3,138.9 H14.8 L11.1,144.6 Z M15.3,165.3 H22.8 L19.1,170.9 Z" fill="#555"/>
 <rect x="21.9" y="133.3" width="16" height="15.5" rx="1.2" fill="#555"/>
 <g stroke="#e6e6e6" stroke-width="1.2" fill="none">
  <path d="M29.4,137 V142.2 L25.4,144.5 M29.4,142.2 L34.4,144.5"/>
 </g>
 <rect x="29.9" y="159.2" width="16" height="15.5" rx="1.2" fill="#555"/>
 <g>
  <path d="M37.9,161.6 L42.8,164.4 L42.8,170.2 L37.9,173 L33,170.2 L33,164.4 Z" fill="#f0f0f0"/>
  <path d="M33,164.4 L37.9,167.2 L42.8,164.4 M37.9,167.2 V173" stroke="#555" stroke-width="1" fill="none"/>
 </g>
 <!-- bulbs & eyes -->
 <g id="be" fill="none" stroke="#6a6a6a" stroke-width="1.2">
  <path d="M303.9,134.2 V136.8 M298.2,135.4 L300.5,137.3 M309.6,135.4 L307.3,137.3 M297.1,141 H300.3 M307.6,141 H311" stroke-width="1.3"/>
  <path d="M302.3,145.3 Q300.6,143.5 300.6,141.4 A3.3,3.3 0 0 1 307.2,141.4 Q307.2,143.5 305.5,145.3"/>
  <path d="M302.6,145 H305.2 V149.5 H302.6 Z" fill="#6a6a6a"/>
  <path d="M321.3,141.9 Q328,135 334.8,141.9 Q328,148.8 321.3,141.9 Z" stroke-width="1.4"/>
  <circle cx="328" cy="141.9" r="2" fill="#6a6a6a" stroke="none"/>
 </g>
 <use href="#be" transform="translate(0,26)"/>
</svg>
<div class="a" style="left:354px;top:102px;font-size:15px;color:#777">?</div>

</body></html>
